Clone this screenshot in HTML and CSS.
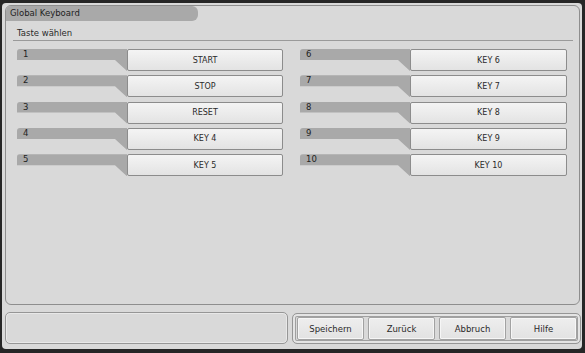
FILE: index.html
```html
<!DOCTYPE html>
<html lang="de">
<head>
    <meta charset="UTF-8">
    <title>Global Keyboard</title>
    <link rel="stylesheet" href="styles.css">
</head>
<body>
    <div class="screen">
        <div class="panel">
            <div class="title">Global Keyboard</div>
            <div class="heading">Taste wählen</div>
            <div class="keys">
                <div class="column">
                    <div class="row"><span class="tab">1</span><button class="key">START</button></div>
                    <div class="row"><span class="tab">2</span><button class="key">STOP</button></div>
                    <div class="row"><span class="tab">3</span><button class="key">RESET</button></div>
                    <div class="row"><span class="tab">4</span><button class="key">KEY 4</button></div>
                    <div class="row"><span class="tab">5</span><button class="key">KEY 5</button></div>
                </div>
                <div class="column">
                    <div class="row"><span class="tab">6</span><button class="key">KEY 6</button></div>
                    <div class="row"><span class="tab">7</span><button class="key">KEY 7</button></div>
                    <div class="row"><span class="tab">8</span><button class="key">KEY 8</button></div>
                    <div class="row"><span class="tab">9</span><button class="key">KEY 9</button></div>
                    <div class="row"><span class="tab">10</span><button class="key">KEY 10</button></div>
                </div>
            </div>
        </div>
        <div class="bottom">
            <div class="status"></div>
            <div class="actions">
                <button class="action">Speichern</button>
                <button class="action">Zurück</button>
                <button class="action">Abbruch</button>
                <button class="action">Hilfe</button>
            </div>
        </div>
    </div>
</body>
</html>
```

FILE: styles.css
```css
body {
    margin: 0;
    background-color: #262626;
    font-family: "DejaVu Sans", Verdana, sans-serif;
    color: #2a2a2a;
}
.screen {
    margin: 3px 3px 0 2px;
    width: 580px;
    height: 346px;
    box-sizing: border-box;
    padding: 2px 0 5px 3px;
    background-color: #d9d9d9;
    border-radius: 4px;
}
.panel {
    width: 575px;
    height: 300px;
    box-sizing: border-box;
    border: 1px solid #8e8e8e;
    border-radius: 6px;
}
.title {
    width: 192px;
    height: 15px;
    line-height: 15px;
    padding-left: 4px;
    box-sizing: border-box;
    background-color: #a9a9a9;
    border-radius: 5px 6px 6px 0;
    font-size: 8.5px;
    color: #1e1e1e;
}
.heading {
    margin: 6px 6px 0 7px;
    height: 13px;
    line-height: 13px;
    padding-left: 4px;
    border-bottom: 1px solid #9a9a9a;
    font-size: 8.5px;
}
.keys {
    display: flex;
    gap: 17px;
    margin-top: 8px;
    padding-left: 11px;
}
.column {
    display: flex;
    flex-direction: column;
    gap: 4.3px;
}
.row {
    display: flex;
    height: 22px;
}
.tab {
    width: 110px;
    height: 22px;
    padding-left: 6px;
    box-sizing: border-box;
    background-color: #a9a9a9;
    border-radius: 3px 0 0 3px;
    clip-path: polygon(0 0, 100% 0, 100% 100%, 98px 11px, 0 11px);
    font-size: 8.5px;
    line-height: 10px;
    color: #222;
}
.key {
    width: 156px;
    height: 22px;
    padding: 0;
    border: 1px solid #8c8c8c;
    border-radius: 2px;
    background: linear-gradient(#f4f4f4, #e3e3e3);
    font-family: inherit;
    font-size: 8px;
    color: #2a2a2a;
}
.column + .column .key {
    width: 157px;
}
.bottom {
    display: flex;
    gap: 4px;
    margin-top: 7px;
    height: 32px;
}
.status {
    width: 283px;
    box-sizing: border-box;
    border: 1px solid #969696;
    border-radius: 5px;
    box-shadow: inset 0 0 0 1px #e8e8e8;
}
.actions {
    width: 289px;
    display: flex;
    gap: 4px;
    margin-top: 1px;
    height: 31px;
    padding: 3px 3px 3px 4px;
    box-sizing: border-box;
    border: 1px solid #969696;
    border-radius: 5px;
    box-shadow: inset 0 0 0 2px #e4e4e4, inset 0 0 0 3px #a0a0a0;
}
.action {
    flex: 1;
    height: 23px;
    padding: 0;
    border: 1px solid #a2a2a2;
    border-radius: 2px;
    background: linear-gradient(#eeeeee, #e2e2e2);
    box-shadow: inset 0 0 0 1px #f6f6f6;
    font-family: inherit;
    font-size: 8.5px;
    color: #2a2a2a;
}
```
